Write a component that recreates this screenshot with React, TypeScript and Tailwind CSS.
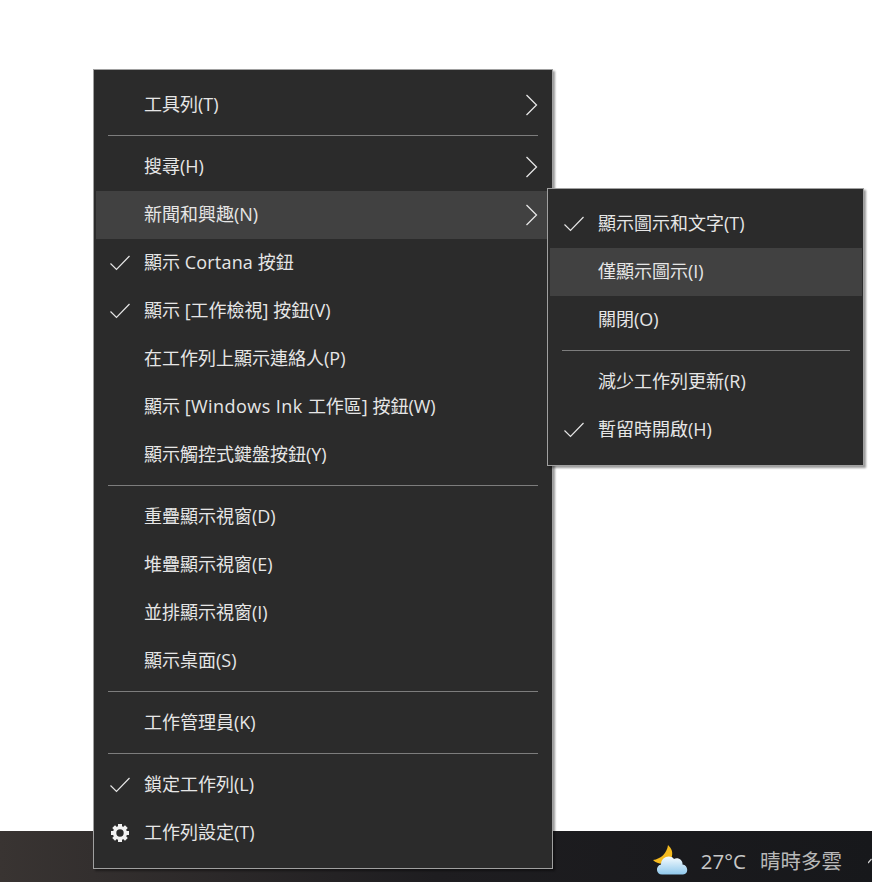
import React from "react";

const font = '[font-family:"Open_Sans","Noto_Sans_CJK_TC",sans-serif]';

function Check() {
  return (
    <svg width="22" height="16" viewBox="0 0 22 16" fill="none" stroke="#e6e6e6" strokeWidth="1.2">
      <path d="M1.5 8.5 L7.5 14.5 L20.5 1" />
    </svg>
  );
}

function Gear() {
  const angles = [0, 45, 90, 135, 180, 225, 270, 315];
  return (
    <svg width="20" height="20" viewBox="0 0 20 20">
      <circle cx="10" cy="10" r="5.4" fill="none" stroke="#f2f2f2" strokeWidth="3.4" />
      {angles.map((a) => (
        <rect key={a} x="8" y="1" width="4" height="3.5" fill="#f2f2f2" transform={`rotate(${a} 10 10)`} />
      ))}
    </svg>
  );
}

function Chevron() {
  return (
    <svg width="13" height="22" viewBox="0 0 13 22" fill="none" stroke="#e6e6e6" strokeWidth="1.3">
      <path d="M1.5 1 L11.5 11 L1.5 21" />
    </svg>
  );
}

type RowProps = {
  label: React.ReactNode;
  check?: boolean;
  gear?: boolean;
  arrow?: boolean;
  active?: boolean;
  sub?: boolean;
};

function Row({ label, check, gear, arrow, active, sub }: RowProps) {
  return (
    <div
      className={`relative ml-[2px] flex h-12 items-center pb-[3px] pl-[48px] ${sub ? "mr-[1px]" : "mr-[2px]"} ${
        active ? "bg-[#414141]" : ""
      }`}
    >
      {check && (
        <span className="absolute left-[13px] top-[16px] flex">
          <Check />
        </span>
      )}
      {gear && (
        <span className="absolute left-[14px] top-[14px] flex">
          <Gear />
        </span>
      )}
      <span className="whitespace-pre text-[18px] leading-none text-[#e6e6e6]">{label}</span>
      {arrow && (
        <span className="absolute right-[12px] top-[13px] flex">
          <Chevron />
        </span>
      )}
    </div>
  );
}

function Sep({ sub }: { sub?: boolean }) {
  return (
    <div className={`flex h-[14px] items-center pb-[1px] pl-[14px] ${sub ? "pr-[13px]" : "pr-[14px]"}`}>
      <div className="h-px w-full bg-[#7d7d7d]" />
    </div>
  );
}

function WeatherIcon() {
  return (
    <svg width="36" height="32" viewBox="0 0 36 32">
      <defs>
        <linearGradient id="cl" x1="0" y1="0" x2="0" y2="1">
          <stop offset="0" stopColor="#f6fcff" />
          <stop offset="1" stopColor="#8fc8ec" />
        </linearGradient>
      </defs>
      <path d="M15 0 C14 8 8 14 0 15 C6 21 17 20 19 11 C20 6 18 3 15 0 Z" fill="#f6bb1f" />
      <path
        d="M9 29.5 C3 29.5 2 21 8 19.5 C8 12 17 9 21 14 C25 12 30 15 29.5 19.5 C35.5 20 36 29.5 30 29.5 Z"
        fill="url(#cl)"
      />
    </svg>
  );
}

function TrayArrow() {
  return (
    <svg width="4" height="6" viewBox="0 0 4 6" fill="none" stroke="#d0d0d0" strokeWidth="1.2">
      <path d="M0 5 L3.5 1" />
    </svg>
  );
}

export default function App() {
  return (
    <div className={`relative flex h-[882px] w-[872px] flex-col justify-end overflow-hidden bg-white ${font}`}>
      <div className="flex h-[51px] items-center justify-end bg-gradient-to-r from-[#393432] via-[#1e1d20] to-[#17181b] pt-[9px]">
        <WeatherIcon />
        <span className="ml-[12px] text-[20.5px] leading-none text-[#c8c8c8]">27°C</span>
        <span className="ml-[14px] text-[20.5px] leading-none text-[#b8b8b8]">晴時多雲</span>
        <span className="ml-[26px] flex">
          <TrayArrow />
        </span>
      </div>

      <div className="absolute left-[93px] top-[69px] w-[460px] border border-[#a0a0a0] bg-[#2b2b2b] pb-[11px] pt-[11px] shadow-[2px_2px_2px_rgba(0,0,0,0.4)]">
        <Row label="工具列(T)" arrow />
        <Sep />
        <Row label="搜尋(H)" arrow />
        <Row label="新聞和興趣(N)" arrow active />
        <Row
          label={
            <>
              顯示 <span className="tracking-[0.2px]">Cortana</span> 按鈕
            </>
          }
          check
        />
        <Row label="顯示 [工作檢視] 按鈕(V)" check />
        <Row label="在工作列上顯示連絡人(P)" />
        <Row
          label={
            <>
              顯示 <span className="tracking-[0.45px]">[Windows Ink </span>工作區] 按鈕(W)
            </>
          }
        />
        <Row label="顯示觸控式鍵盤按鈕(Y)" />
        <Sep />
        <Row label="重疊顯示視窗(D)" />
        <Row label="堆疊顯示視窗(E)" />
        <Row label="並排顯示視窗(I)" />
        <Row label="顯示桌面(S)" />
        <Sep />
        <Row label="工作管理員(K)" />
        <Sep />
        <Row label="鎖定工作列(L)" check />
        <Row label="工作列設定(T)" gear />
      </div>

      <div className="absolute left-[547px] top-[188px] w-[317px] border border-[#a0a0a0] bg-[#2b2b2b] pb-[11px] pt-[11px] shadow-[2px_2px_2px_rgba(0,0,0,0.4)]">
        <Row label="顯示圖示和文字(T)" check sub />
        <Row label="僅顯示圖示(I)" active sub />
        <Row label="關閉(O)" sub />
        <Sep sub />
        <Row label="減少工作列更新(R)" sub />
        <Row label="暫留時開啟(H)" check sub />
      </div>
    </div>
  );
}
